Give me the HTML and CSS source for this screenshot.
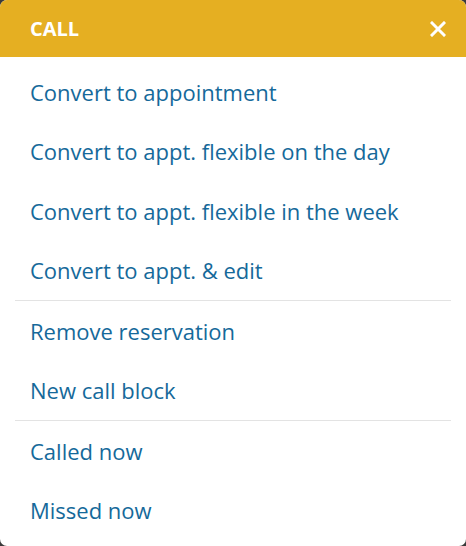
FILE: index.html
```html
<!DOCTYPE html>
<html lang="en">
<head>
  <meta charset="UTF-8">
  <title>Call</title>
  <link rel="stylesheet" href="styles.css">
</head>
<body>
  <div class="dialog">
    <div class="dialog-header">
      <span class="dialog-title">CALL</span>
      <button class="close-btn" aria-label="Close">
        <svg width="16" height="16" viewBox="0 0 16 16">
          <path d="M2 2 L14 14 M14 2 L2 14" stroke="#fff" stroke-width="3" stroke-linecap="square" fill="none"/>
        </svg>
      </button>
    </div>
    <ul class="menu">
      <li><a href="#">Convert to appointment</a></li>
      <li><a href="#">Convert to appt. flexible on the day</a></li>
      <li><a href="#">Convert to appt. flexible in the week</a></li>
      <li><a href="#">Convert to appt. &amp; edit</a></li>
      <li class="divider"></li>
      <li><a href="#">Remove reservation</a></li>
      <li><a href="#">New call block</a></li>
      <li class="divider"></li>
      <li><a href="#">Called now</a></li>
      <li><a href="#">Missed now</a></li>
    </ul>
  </div>
</body>
</html>
```

FILE: styles.css
```css
html, body {
  margin: 0;
  padding: 0;
  background-color: #3a3a3a;
}

body {
  font-family: "Open Sans", Arial, sans-serif;
  width: 466px;
  height: 546px;
}

.dialog {
  background-color: white;
  border-radius: 7px;
  overflow: hidden;
  height: 546px;
}

.dialog-header {
  background-color: #e5af22;
  height: 57px;
  display: flex;
  align-items: center;
  justify-content: space-between;
  padding: 0 20px 0 30px;
}

.dialog-title {
  color: white;
  font-weight: bold;
  font-size: 20px;
}

.close-btn {
  background: none;
  border: none;
  padding: 0;
  display: flex;
  cursor: pointer;
}

.menu {
  list-style: none;
  margin: 0;
  padding: 5px 0 0;
}

.menu li a {
  display: flex;
  align-items: center;
  height: 59.5px;
  padding: 0 30px;
  color: #15699a;
  font-size: 22px;
  line-height: 1;
  text-decoration: none;
}

.menu .divider {
  height: 1px;
  margin: 0 15px;
  background-color: #e3e3e3;
}
```
